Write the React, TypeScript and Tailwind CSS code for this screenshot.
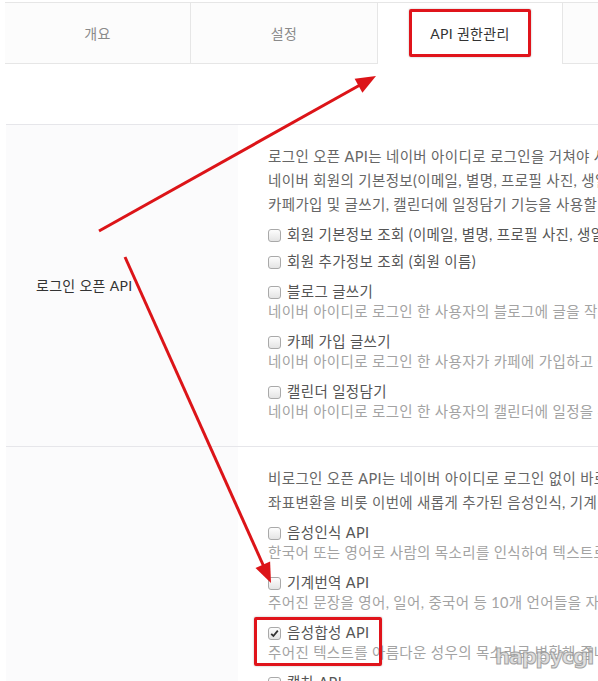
import React from 'react';

const FONT = { fontFamily: 'Lato, "Noto Sans CJK KR", "Liberation Sans", sans-serif' };

type Item = { label: string; desc?: string; checked?: boolean };

const loginItems: Item[] = [
  { label: '회원 기본정보 조회 (이메일, 별명, 프로필 사진, 생일, 연령대)' },
  { label: '회원 추가정보 조회 (회원 이름)' },
  { label: '블로그 글쓰기', desc: '네이버 아이디로 로그인 한 사용자의 블로그에 글을 작성할 수 있습니다.' },
  { label: '카페 가입 글쓰기', desc: '네이버 아이디로 로그인 한 사용자가 카페에 가입하고 글을 작성할 수 있습니다.' },
  { label: '캘린더 일정담기', desc: '네이버 아이디로 로그인 한 사용자의 캘린더에 일정을 추가할 수 있습니다.' },
];

const openItems: Item[] = [
  { label: '음성인식 API', desc: '한국어 또는 영어로 사람의 목소리를 인식하여 텍스트로 변환합니다.' },
  { label: '기계번역 API', desc: '주어진 문장을 영어, 일어, 중국어 등 10개 언어들을 자동 번역합니다.' },
  { label: '음성합성 API', desc: '주어진 텍스트를 아름다운 성우의 목소리로 변환해 줍니다.', checked: true },
  { label: '캡차 API', desc: '자동 입력 방지를 위한 캡차 이미지를 제공합니다.' },
];

function Check({ checked }: { checked?: boolean }) {
  return (
    <span className="w-[13px] h-[13px] shrink-0 rounded-[3px] border border-[#a9a9a9] bg-gradient-to-b from-[#fdfdfd] to-[#e4e4e4] flex items-center justify-center">
      {checked && (
        <svg width="9" height="9" viewBox="0 0 9 9">
          <path d="M1.2 4.8 L3.4 7 L7.8 1.6" fill="none" stroke="#333" strokeWidth="1.8" />
        </svg>
      )}
    </span>
  );
}

function Option({ item, first }: { item: Item; first?: boolean }) {
  return (
    <div className={first ? 'mt-[8px]' : item.desc ? 'mt-[10px]' : 'mt-[7px]'}>
      <div className="flex items-center gap-[6px] h-[20px] text-[#555]">
        <Check checked={item.checked} />
        <span>{item.label}</span>
      </div>
      {item.desc && <div className="h-[20px] leading-[20px] text-[#a3a3a3]">{item.desc}</div>}
    </div>
  );
}

function Row({ label, lines, items, last }: { label?: string; lines: string[]; items: Item[]; last?: boolean }) {
  return (
    <div className="flex border-t border-[#e6e6ea]">
      <div className="w-[232px] shrink-0 bg-[#fbfbfc] flex items-center pl-[30px] text-[#333] tracking-[0.3px]">{label}</div>
      <div className={`flex-1 pl-[30px] pt-[20px] ${last ? '' : 'pb-[24px]'} whitespace-nowrap text-[14.5px] tracking-[0.35px]`}>
        <div className="leading-[24px] text-[#666]">
          {lines.map((l) => (
            <div key={l}>{l}</div>
          ))}
        </div>
        {items.map((it, i) => (
          <Option key={it.label} item={it} first={i === 0} />
        ))}
      </div>
    </div>
  );
}

export default function App() {
  return (
    <div className="relative w-[598px] h-[681px] overflow-hidden bg-white text-[14px]" style={FONT}>
      <div className="mt-[2px] ml-[5px] flex border-t border-[#e6e6e6] tracking-[0.3px]">
        <div className="w-[186px] h-[61px] shrink-0 flex items-center justify-center bg-[#fcfcfc] border-b border-r border-[#e6e6e6] text-[#8a8a8a]">개요</div>
        <div className="w-[186px] h-[61px] shrink-0 flex items-center justify-center bg-[#fcfcfc] border-b border-[#e6e6e6] text-[#8a8a8a]">설정</div>
        <div className="w-[186px] h-[61px] shrink-0 flex items-center justify-center bg-white border-l border-r border-[#e6e6e6] text-[#333]">API 권한관리</div>
        <div className="w-[186px] h-[61px] shrink-0 bg-[#fcfcfc] border-b border-[#e6e6e6]" />
      </div>

      <div className="mt-[60px] ml-[6px]">
        <Row
          label="로그인 오픈 API"
          lines={[
            '로그인 오픈 API는 네이버 아이디로 로그인을 거쳐야 사용할 수 있는 API입니다.',
            '네이버 회원의 기본정보(이메일, 별명, 프로필 사진, 생일, 연령대) 조회와 블로그 글쓰기,',
            '카페가입 및 글쓰기, 캘린더에 일정담기 기능을 사용할 수 있습니다.',
          ]}
          items={loginItems}
        />
        <Row
          lines={[
            '비로그인 오픈 API는 네이버 아이디로 로그인 없이 바로 사용할 수 있는 API입니다.',
            '좌표변환을 비롯 이번에 새롭게 추가된 음성인식, 기계번역, 음성합성 API를 사용할 수 있습니다.',
          ]}
          items={openItems}
          last
        />
      </div>

      {/* highlight boxes */}
      <div className="absolute left-[409px] top-[9px] w-[122px] h-[48px] border-[3px] border-[#e0141b] rounded-[2px] shadow-[0_0_2px_rgba(0,0,0,0.3)]" />
      <div className="absolute left-[254px] top-[617px] w-[128px] h-[49px] border-[3px] border-[#e0141b] rounded-[2px] shadow-[0_0_2px_rgba(0,0,0,0.3)]" />

      {/* arrows */}
      <svg className="absolute inset-0 pointer-events-none" width="598" height="681">
        <line x1="99" y1="231" x2="360" y2="85" stroke="#dc1418" strokeWidth="3" />
        <polygon points="376,76 362.4,92.8 354.6,78.8" fill="#dc1418" />
        <line x1="125" y1="257" x2="264" y2="567" stroke="#dc1418" strokeWidth="3" />
        <polygon points="271,583 270.1,561.4 255.5,568" fill="#dc1418" />
      </svg>

      {/* watermark */}
      <div
        className="absolute left-[495px] top-[644px] text-[21px] leading-[26px] font-bold tracking-[-1.2px] text-[#dcdcdc] opacity-90"
        style={{ fontFamily: '"DejaVu Sans", sans-serif', WebkitTextStroke: '1px #9a9a9a' }}
      >
        happycgi
      </div>
    </div>
  );
}
